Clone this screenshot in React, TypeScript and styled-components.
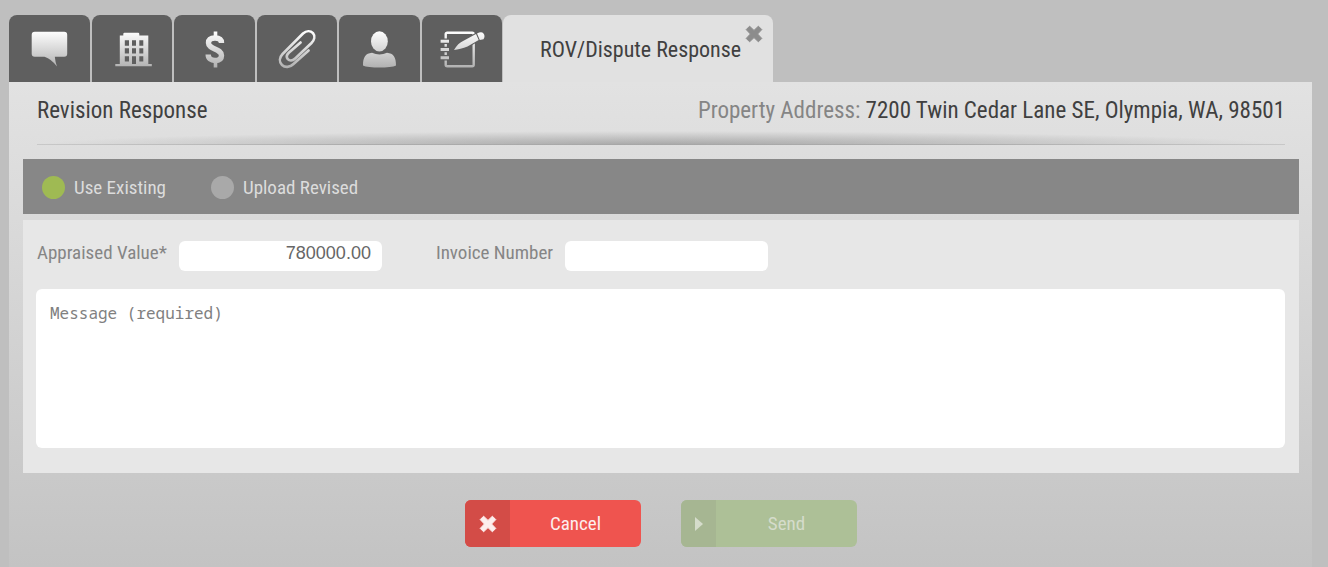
import React, { useState } from "react";
import styled, { createGlobalStyle, css } from "styled-components";

const condensed = `"Roboto Condensed", "Liberation Sans Narrow", Roboto, sans-serif`;

const GlobalStyle = createGlobalStyle`
  *, *::before, *::after { box-sizing: border-box; }
  html, body, #root { margin: 0; }
  body { background: #bfbfbf; font-family: ${condensed}; }
  button, input, textarea { font: inherit; border: 0; margin: 0; }
`;

const Page = styled.div`
  display: flex;
  flex-direction: column;
  min-height: 100vh;
  padding: 15px 16px 0 9px;
`;

const TabBar = styled.nav`
  display: flex;
`;

const IconTabs = styled.div`
  display: flex;
  gap: 2px;
  width: 493px;
  margin-right: 1px;
`;

const IconTab = styled.button`
  display: flex;
  flex: 1;
  align-items: center;
  justify-content: center;
  height: 67px;
  padding: 0;
  border-radius: 8px 8px 0 0;
  background: #5f5f5f;
  cursor: pointer;
`;

const ActiveTab = styled.div`
  position: relative;
  display: flex;
  align-items: center;
  height: 67px;
  padding: 2px 32px 0 37px;
  border-radius: 8px 8px 0 0;
  background: #e1e1e1;
  color: #404040;
  font-size: 22px;
  line-height: 28px;
  white-space: nowrap;
`;

const CloseButton = styled.button`
  position: absolute;
  top: 10px;
  right: 10px;
  display: flex;
  padding: 0;
  background: none;
  color: #8c8c8c;
  cursor: pointer;
`;

const Panel = styled.main`
  flex: 1;
  padding: 0 13px 20px 14px;
  background: linear-gradient(#e2e2e2, #d8d8d8 35%, #c3c3c3);
`;

const Header = styled.header`
  display: flex;
  align-items: center;
  justify-content: space-between;
  height: 63px;
  margin: 0 14px 14px;
  padding-bottom: 6px;
  background:
    linear-gradient(90deg, #c8c8c8, #adadad 25%, #a6a6a6 50%, #adadad 75%, #c8c8c8) bottom / 100% 1px no-repeat,
    radial-gradient(50% 100% at 50% 100%, #00000040, #00000000) bottom / 100% 14px no-repeat;
  color: #404040;
  font-size: 23px;
  line-height: 28px;
`;

const Title = styled.h1`
  margin: 0;
  font: inherit;
`;

const Address = styled.p`
  margin: 0;
`;

const AddressLabel = styled.span`
  color: #858585;
`;

const ModeBar = styled.div`
  display: flex;
  align-items: center;
  gap: 45px;
  height: 55px;
  padding: 2px 19px 0;
  background: #878787;
`;

const Option = styled.label`
  display: flex;
  align-items: center;
  gap: 9px;
  color: #dcdcdc;
  font-size: 19px;
  line-height: 24px;
`;

const Radio = styled.input`
  appearance: none;
  width: 23px;
  height: 23px;
  margin: 0;
  border-radius: 50%;
  background: #a9a9a9;
  &:checked { background: #9fba53; }
`;

const FormBody = styled.section`
  margin-top: 6px;
  padding: 21px 14px 25px 13px;
  background: #e7e7e7;
`;

const Fields = styled.div`
  display: flex;
  gap: 53px;
  margin-bottom: 18px;
`;

const Field = styled.label`
  display: flex;
  gap: 12px;
  padding-left: 1px;
  color: #858585;
  font-size: 19px;
  line-height: 24px;
`;

const TextInput = styled.input`
  width: 203px;
  height: 30px;
  padding: 0 11px 6px;
  border-radius: 6px;
  background: #fff;
  color: #666;
  font-family: "Liberation Sans", Arial, sans-serif;
  font-size: 18px;
  line-height: 24px;
  text-align: right;
`;

const Message = styled.textarea`
  display: block;
  width: 100%;
  height: 159px;
  padding: 12px 14px;
  border-radius: 6px;
  background: #fff;
  color: #666;
  font-family: Consolas, "Noto Sans Mono", "Liberation Mono", monospace;
  font-size: 16px;
  line-height: 24px;
  resize: none;
  &::placeholder { color: #808080; opacity: 1; }
`;

const Actions = styled.div`
  display: flex;
  justify-content: center;
  gap: 40px;
  margin-top: 27px;
`;

const ActionButton = styled.button<{ $kind: "cancel" | "send" }>`
  display: flex;
  width: 176px;
  height: 47px;
  padding: 0;
  overflow: hidden;
  border-radius: 6px;
  font-size: 19px;
  line-height: 24px;
  ${({ $kind }) =>
    $kind === "cancel"
      ? css`background: #ef544f; color: #fdeeed;`
      : css`background: #adc097; color: #d5dccb;`}
`;

const ActionIcon = styled.span<{ $kind: "cancel" | "send" }>`
  display: flex;
  align-items: center;
  justify-content: center;
  align-self: stretch;
  width: ${({ $kind }) => ($kind === "cancel" ? 45 : 35)}px;
  background: ${({ $kind }) => ($kind === "cancel" ? "#d34c47" : "#a6b692")};
`;

const ActionText = styled.span`
  flex: 1;
  align-self: center;
  text-align: center;
`;

const Cross = () => (
  <svg width="18" height="18" viewBox="0 0 18 18" aria-hidden="true">
    <path
      d="M4.6 1.200 9 5.400 13.400 1.200l3.400 3.400L12.600 9l4.200 4.400-3.400 3.400L9 12.600l-4.400 4.200-3.400-3.400L5.400 9 1.200 4.600z"
      fill="currentColor"
      stroke="currentColor"
      strokeWidth="1"
      strokeLinejoin="round"
    />
  </svg>
);

type GlyphName = "chat" | "building" | "dollar" | "clip" | "person" | "notes";

/* All glyphs share one 48x40 canvas and one top-to-bottom silver gradient. */
const Glyph = ({ name }: { name: GlyphName }) => {
  const paint = `url(#silver-${name})`;
  return (
    <svg width="48" height="40" viewBox="0 0 48 40" aria-hidden="true">
      <defs>
        <linearGradient id={`silver-${name}`} gradientUnits="userSpaceOnUse" x1="0" y1="2" x2="0" y2="39">
          <stop offset="0" stopColor="#fff" />
          <stop offset="1" stopColor="#b0b0b0" />
        </linearGradient>
      </defs>
      {name === "chat" && (
        <path fill={paint} d="M9.700 2.700h29.500a3 3 0 0 1 3 3v19a3 3 0 0 1-3 3H29.800q.4 5 2.200 9.800Q26.500 30 19.500 27.700H9.700a3 3 0 0 1-3-3v-19a3 3 0 0 1 3-3z" />
      )}
      {name === "building" && (
        <path
          fill={paint}
          fillRule="evenodd"
          d="M15.300 5q0-1.200 1.200-1.200h13.600q1.200 0 1.200 1.200v1.600h9V35h3.500v2.300H7.300V35h4.500V6.600h3.500zM16.800 11.300v5.400H21v-5.400zm7.200 0v5.400h4v-5.400zm7.300 0v5.400h4v-5.400zM16.800 19.200v5.300H21v-5.300zm7.200 0v5.300h4v-5.300zm7.300 0v5.300h4v-5.300zM16.800 27.200v5.300H21v-5.300zm7.200 0V35h4v-7.800zm7.300 0v5.300h4v-5.300z"
        />
      )}
      {name === "dollar" && (
        <g fill="none" stroke={paint}>
          <path strokeWidth="5.400" d="M31.500 14C31.500 10.500 29 9 25 9S18.500 10.500 18.500 14c0 6.500 13 5.500 13 12.500 0 3.500-2.500 5-6.500 5s-6.800-2-6.800-6" />
          <path strokeWidth="3.600" d="M25.500 2.500v5.500M25.500 32.500V38.500" />
        </g>
      )}
      {name === "clip" && (
        <path
          fill="none"
          stroke={paint}
          strokeWidth="2.600"
          strokeLinecap="round"
          d="M35.600 21.500 20.500 35C17 38.500 12 38.800 9 36 6 33 6.300 28.500 9.600 25L30 4.500C33.500 1.500 37.500 1.500 40 4.200 42.300 7 41.500 11 38.500 14L22.200 29.500C19.500 32 16.500 32 14.800 30.200 13 28 13.500 26 15.800 23.800L27.600 13.500"
        />
      )}
      {name === "person" && (
        <g fill={paint}>
          <ellipse cx="24.400" cy="12.400" rx="8.400" ry="10.200" />
          <path d="M8 36.500C8 28 10.500 24.500 17 23.800q7.500 3.200 15 0C38.500 24.500 41 28 41 36.500 36 39.200 13 39.200 8 36.500z" />
        </g>
      )}
      {name === "notes" && (
        <g>
          <rect x="7.700" y="3.700" width="28" height="33.600" rx="1.500" fill="none" stroke={paint} strokeWidth="2.400" />
          <path stroke="#5f5f5f" strokeWidth="5.500" d="M2.500 12.200h9M2.500 20.500h9M2.500 28.800h9" />
          <path fill={paint} d="M2.600 10.700h8.400v3H2.600zM2.600 19h8.400v3H2.600zM2.600 27.300h8.400v3H2.600z" />
          <path
            stroke="#5f5f5f"
            strokeWidth="2"
            fill={paint}
            paintOrder="stroke"
            d="M16 21C18.500 16.500 21.500 13.500 26 11.500L38 5l2.700 6-11.200 6.500C25 19.500 20 20.500 16 21z"
          />
          <path fill={paint} d="M39 4.600Q43.500 1.800 45.500 4.500T45.500 10.300L41.800 11z" />
        </g>
      )}
    </svg>
  );
};

const tabs: { name: GlyphName; label: string }[] = [
  { name: "chat", label: "Messages" },
  { name: "building", label: "Property" },
  { name: "dollar", label: "Fees" },
  { name: "clip", label: "Attachments" },
  { name: "person", label: "Contacts" },
  { name: "notes", label: "Notes" },
];

export default function App() {
  const [mode, setMode] = useState("existing");
  const [value, setValue] = useState("780000.00");

  return (
    <>
      <GlobalStyle />
      <Page>
        <TabBar>
          <IconTabs>
            {tabs.map((tab) => (
              <IconTab key={tab.name} type="button" aria-label={tab.label}>
                <Glyph name={tab.name} />
              </IconTab>
            ))}
          </IconTabs>
          <ActiveTab>
            ROV/Dispute Response
            <CloseButton type="button" aria-label="Close">
              <Cross />
            </CloseButton>
          </ActiveTab>
        </TabBar>
        <Panel>
          <Header>
            <Title>Revision Response</Title>
            <Address>
              <AddressLabel>Property Address:</AddressLabel> 7200 Twin Cedar Lane SE, Olympia, WA, 98501
            </Address>
          </Header>
          <ModeBar>
            <Option>
              <Radio type="radio" name="mode" checked={mode === "existing"} onChange={() => setMode("existing")} />
              Use Existing
            </Option>
            <Option>
              <Radio type="radio" name="mode" checked={mode === "upload"} onChange={() => setMode("upload")} />
              Upload Revised
            </Option>
          </ModeBar>
          <FormBody>
            <Fields>
              <Field>
                Appraised Value*
                <TextInput value={value} onChange={(e) => setValue(e.target.value)} />
              </Field>
              <Field>
                Invoice Number
                <TextInput />
              </Field>
            </Fields>
            <Message aria-label="Message" placeholder="Message (required)" />
          </FormBody>
          <Actions>
            <ActionButton type="button" $kind="cancel">
              <ActionIcon $kind="cancel">
                <Cross />
              </ActionIcon>
              <ActionText>Cancel</ActionText>
            </ActionButton>
            <ActionButton type="button" $kind="send" disabled>
              <ActionIcon $kind="send">
                <svg width="8" height="14" viewBox="0 0 8 14" aria-hidden="true">
                  <path d="M0 0l8 7-8 7z" fill="currentColor" />
                </svg>
              </ActionIcon>
              <ActionText>Send</ActionText>
            </ActionButton>
          </Actions>
        </Panel>
      </Page>
    </>
  );
}
